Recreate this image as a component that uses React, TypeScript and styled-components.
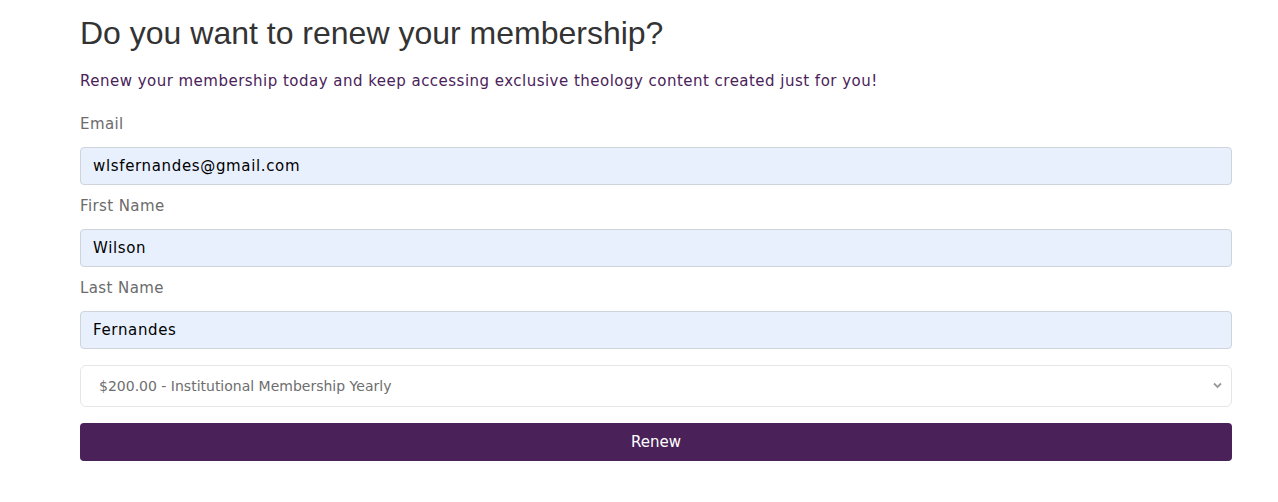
import React from "react";
import styled, { createGlobalStyle } from "styled-components";

const Global = createGlobalStyle`
  * { box-sizing: border-box; }
  body { margin: 0; background: #fff; font-family: "DejaVu Sans", "Noto Sans", sans-serif; }
`;

const Page = styled.div`
  padding: 14px 0 0 80px;
`;

const Form = styled.form`
  width: 1152px;
  display: flex;
  flex-direction: column;
`;

const Title = styled.h1`
  margin: 0;
  font-family: "Liberation Sans", Arial, sans-serif;
  font-weight: 400;
  font-size: 32px;
  line-height: 38px;
  color: #333;
`;

const Lead = styled.p`
  margin: 17px 0 0;
  font-size: 15px;
  line-height: 24px;
  letter-spacing: 0.48px;
  color: #4a2259;
`;

const Label = styled.label<{ $first?: boolean }>`
  display: block;
  margin: ${(p) => (p.$first ? "19px" : "9px")} 0 11px;
  font-size: 15px;
  line-height: 24px;
  letter-spacing: 0.4px;
  color: #6b6b6b;
`;

const Input = styled.input`
  display: block;
  width: 100%;
  height: 38px;
  padding: 0 12px;
  border: 1px solid #ced4da;
  border-radius: 4px;
  background: #e8f0fe;
  font-family: inherit;
  font-size: 15px;
  letter-spacing: 0.65px;
  color: #000;
  outline: none;
`;

const SelectWrap = styled.div`
  position: relative;
  margin-top: 16px;
`;

const Select = styled.select`
  display: block;
  width: 100%;
  height: 42px;
  padding: 0 40px 0 18px;
  border: 1px solid #e6e6e6;
  border-radius: 6px;
  background: #fff;
  appearance: none;
  font-family: inherit;
  font-size: 14px;
  color: #6e6e6e;
  outline: none;
`;

const Chevron = styled.svg`
  position: absolute;
  right: 10px;
  top: 17px;
  width: 9px;
  height: 7px;
  pointer-events: none;
`;

const Button = styled.button`
  margin-top: 16px;
  height: 38px;
  width: 100%;
  border: 0;
  border-radius: 4px;
  background: #4a2259;
  color: #fff;
  font-family: inherit;
  font-size: 15px;
  cursor: pointer;
`;

export default function App() {
  return (
    <>
      <Global />
      <Page>
        <Form onSubmit={(e) => e.preventDefault()}>
          <Title>Do you want to renew your membership?</Title>
          <Lead>
            Renew your membership today and keep accessing exclusive theology content created just for you!
          </Lead>
          <Label $first htmlFor="email">Email</Label>
          <Input id="email" defaultValue="wlsfernandes@gmail.com" />
          <Label htmlFor="first">First Name</Label>
          <Input id="first" defaultValue="Wilson" />
          <Label htmlFor="last">Last Name</Label>
          <Input id="last" defaultValue="Fernandes" />
          <SelectWrap>
            <Select defaultValue="inst">
              <option value="inst">$200.00 - Institutional Membership Yearly</option>
            </Select>
            <Chevron viewBox="0 0 9 7">
              <path d="M1 1.5 L4.5 5 L8 1.5" stroke="#999" strokeWidth="1.8" fill="none" />
            </Chevron>
          </SelectWrap>
          <Button type="submit">Renew</Button>
        </Form>
      </Page>
    </>
  );
}
